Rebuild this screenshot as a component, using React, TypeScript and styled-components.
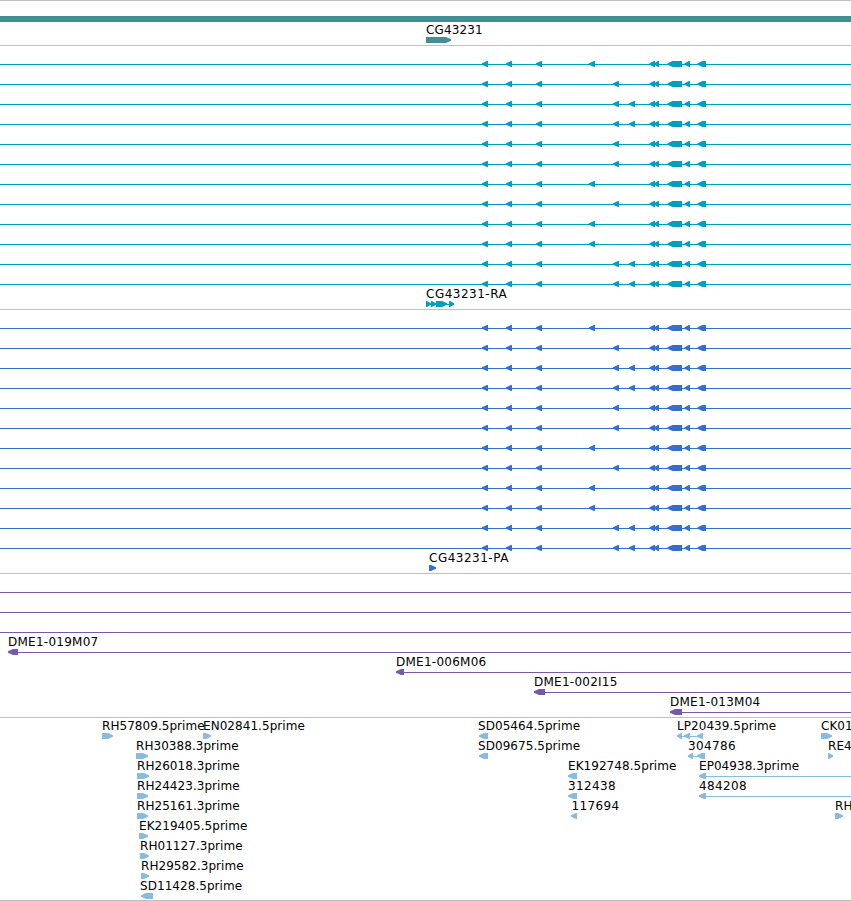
import React from 'react'

import styled, { createGlobalStyle } from 'styled-components'

const COLORS = {
  gene: '#3f8f95',
  transcript: '#009fc0',
  protein: '#3370cc',
  clone: '#7759a8',
  est: '#88bbdd',
}

const VIEW_WIDTH = 851

type Direction = 'left' | 'right'
type Span = [start: number, end: number]

type Feature = {
  name?: string
  // where the name is written, when it is not at the first block
  nameX?: number
  tracking?: number
  direction: Direction
  blocks: Span[]
  line?: Span
}

type FeatureRow = Feature[]

const FULL: Span = [0, VIEW_WIDTH]

const HEAD_EXONS: Span[] = [
  [482, 488],
  [506, 512],
  [536, 542],
]
const TAIL_EXONS: Span[] = [
  [649.5, 655],
  [654, 659],
  [667.5, 682],
  [684.5, 690],
  [697.5, 706],
]

// the middle exons are the only ones that differ between the isoforms
const A: Span[] = [[589, 595]]
const B: Span[] = [[613, 619]]
const C: Span[] = [
  [613, 619],
  [629, 635],
]

const isoformRows: FeatureRow[] = [A, B, C, C, B, B, A, B, A, A, C, C].map((middle) => [
  { direction: 'left', blocks: [...HEAD_EXONS, ...middle, ...TAIL_EXONS], line: FULL },
])

const geneRows: FeatureRow[] = [[{ name: 'CG43231', direction: 'right', blocks: [[426, 451]], tracking: 0.12 }]]

const transcriptRows: FeatureRow[] = [
  ...isoformRows,
  [
    {
      name: 'CG43231-RA',
      direction: 'right',
      blocks: [
        [426, 431],
        [431, 436],
        [436, 447],
        [449, 454],
      ],
      line: [426, 454],
      tracking: 0.5,
    },
  ],
]

const proteinRows: FeatureRow[] = [
  ...isoformRows,
  [{ name: 'CG43231-PA', direction: 'right', blocks: [[429, 436]], tracking: 0.5 }],
]

const clone = (name: string, start: number, end: number): FeatureRow => [
  { name, direction: 'left', blocks: [[start, end]], line: [end, VIEW_WIDTH], tracking: 0.25 },
]

const cloneRows: FeatureRow[] = [
  [{ direction: 'left', blocks: [], line: FULL }],
  [{ direction: 'left', blocks: [], line: FULL }],
  [{ direction: 'left', blocks: [], line: FULL }],
  clone('DME1-019M07', 8, 18),
  clone('DME1-006M06', 396, 404),
  clone('DME1-002I15', 534, 545),
  clone('DME1-013M04', 670, 682),
]

const est = (name: string, direction: Direction, start: number, end: number): Feature => ({
  name,
  direction,
  blocks: [[start, end]],
})

const estRows: FeatureRow[] = [
  [
    est('RH57809.5prime', 'right', 102, 113),
    est('EN02841.5prime', 'right', 203, 211),
    { ...est('SD05464.5prime', 'left', 479, 488), nameX: 478 },
    {
      name: 'LP20439.5prime',
      direction: 'left',
      blocks: [
        [677, 682],
        [684, 690],
        [697, 703],
      ],
      line: [677, 703],
    },
    est('CK01', 'right', 821, 832),
  ],
  [
    est('RH30388.3prime', 'right', 136, 148),
    { ...est('SD09675.5prime', 'left', 479, 488), nameX: 478 },
    {
      name: '304786',
      direction: 'left',
      blocks: [
        [688, 693],
        [697, 705],
      ],
      line: [688, 705],
      tracking: 0.37,
    },
    est('RE4', 'right', 828, 833),
  ],
  [
    est('RH26018.3prime', 'right', 137, 149),
    est('EK192748.5prime', 'left', 568, 577),
    { ...est('EP04938.3prime', 'left', 699, 706), line: [706, VIEW_WIDTH] },
  ],
  [
    est('RH24423.3prime', 'right', 137, 148),
    { ...est('312438', 'left', 568, 577), tracking: 0.37 },
    { ...est('484208', 'left', 699, 706), line: [706, VIEW_WIDTH], tracking: 0.37 },
  ],
  [
    est('RH25161.3prime', 'right', 137, 148),
    { ...est('117694', 'left', 571, 577), nameX: 571.5, tracking: 0.37 },
    est('RH', 'right', 835, 843),
  ],
  [est('EK219405.5prime', 'right', 139, 148)],
  [est('RH01127.3prime', 'right', 140, 149)],
  [est('RH29582.3prime', 'right', 141, 149)],
  [{ ...est('SD11428.5prime', 'left', 141, 153), nameX: 140 }],
]

// a blunt head that widens to the full height just before the body
const arrowPoints = ([start, end]: Span, direction: Direction) => {
  const head = Math.min(5, end - start - 1)
  if (direction === 'left') {
    return `${start},2.3 ${start + head},0 ${end},0 ${end},6 ${start + head},6 ${start},3.7`
  }
  return `${start},0 ${end - head},0 ${end},2.3 ${end},3.7 ${end - head},6 ${start},6`
}

const FeatureGlyph: React.FC<{ feature: Feature }> = ({ feature }) => (
  <g>
    {feature.line && <rect x={feature.line[0]} y={3} width={feature.line[1] - feature.line[0]} height={1} />}
    {feature.blocks.map((block) => (
      <polygon key={block[0]} points={arrowPoints(block, feature.direction)} />
    ))}
  </g>
)

type TrackProps = {
  rows: FeatureRow[]
  color: string
  isLast?: boolean
  children?: React.ReactNode
}

const Track: React.FC<TrackProps> = ({ rows, color, isLast, children }) => (
  <TrackContainer $isLast={isLast}>
    {children}
    {rows.map((row, index) => (
      <Row key={`row_${index}`}>
        <Names>
          {row.map(
            (feature) =>
              feature.name && (
                <Name
                  key={feature.name}
                  $x={feature.nameX ?? feature.blocks[0][0]}
                  $tracking={feature.tracking ?? 0.05}>
                  {feature.name}
                </Name>
              )
          )}
        </Names>
        <Glyphs $color={color} viewBox={`0 0 ${VIEW_WIDTH} 6`}>
          {row.map((feature, featureIndex) => (
            <FeatureGlyph key={`feature_${featureIndex}`} feature={feature} />
          ))}
        </Glyphs>
      </Row>
    ))}
  </TrackContainer>
)

const App: React.FC = () => (
  <>
    <GlobalStyle />
    <Browser>
      <Track rows={geneRows} color={COLORS.gene}>
        <GeneBand />
      </Track>
      <Track rows={transcriptRows} color={COLORS.transcript} />
      <Track rows={proteinRows} color={COLORS.protein} />
      <Track rows={cloneRows} color={COLORS.clone} />
      <Track rows={estRows} color={COLORS.est} isLast />
    </Browser>
  </>
)

const GlobalStyle = createGlobalStyle`
  body {
    margin: 0;
    background: #fff;
    overflow: hidden;
  }
`

const Browser = styled.main`
  width: ${VIEW_WIDTH}px;
  height: 901px;
  box-sizing: border-box;
  border-top: 1px solid #c0c0c0;
  overflow: hidden;
  color: #000;
  font-family: 'DejaVu Sans', sans-serif;
  font-size: 12px;
`

const TrackContainer = styled.section<{ $isLast?: boolean }>`
  display: flex;
  flex-direction: column;
  padding: 2px 0 ${(props) => (props.$isLast ? 0 : 1)}px;
  border-bottom: 1px solid #c0c0c0;
`

const GeneBand = styled.div`
  height: 6px;
  margin: 13px 0 2px;
  background: ${COLORS.gene};
`

const Row = styled.div`
  display: flex;
  flex-direction: column;
  height: 20px;
`

// every name shares one grid cell, so neighbours may run into each other
const Names = styled.div`
  display: grid;
  height: 13px;
  overflow: hidden;
`

const Name = styled.span<{ $x: number; $tracking: number }>`
  grid-area: 1 / 1;
  margin-left: ${(props) => props.$x}px;
  line-height: 13px;
  letter-spacing: ${(props) => props.$tracking}px;
  white-space: nowrap;
`

const Glyphs = styled.svg<{ $color: string }>`
  display: block;
  width: ${VIEW_WIDTH}px;
  height: 6px;
  fill: ${(props) => props.$color};
`

export default App
